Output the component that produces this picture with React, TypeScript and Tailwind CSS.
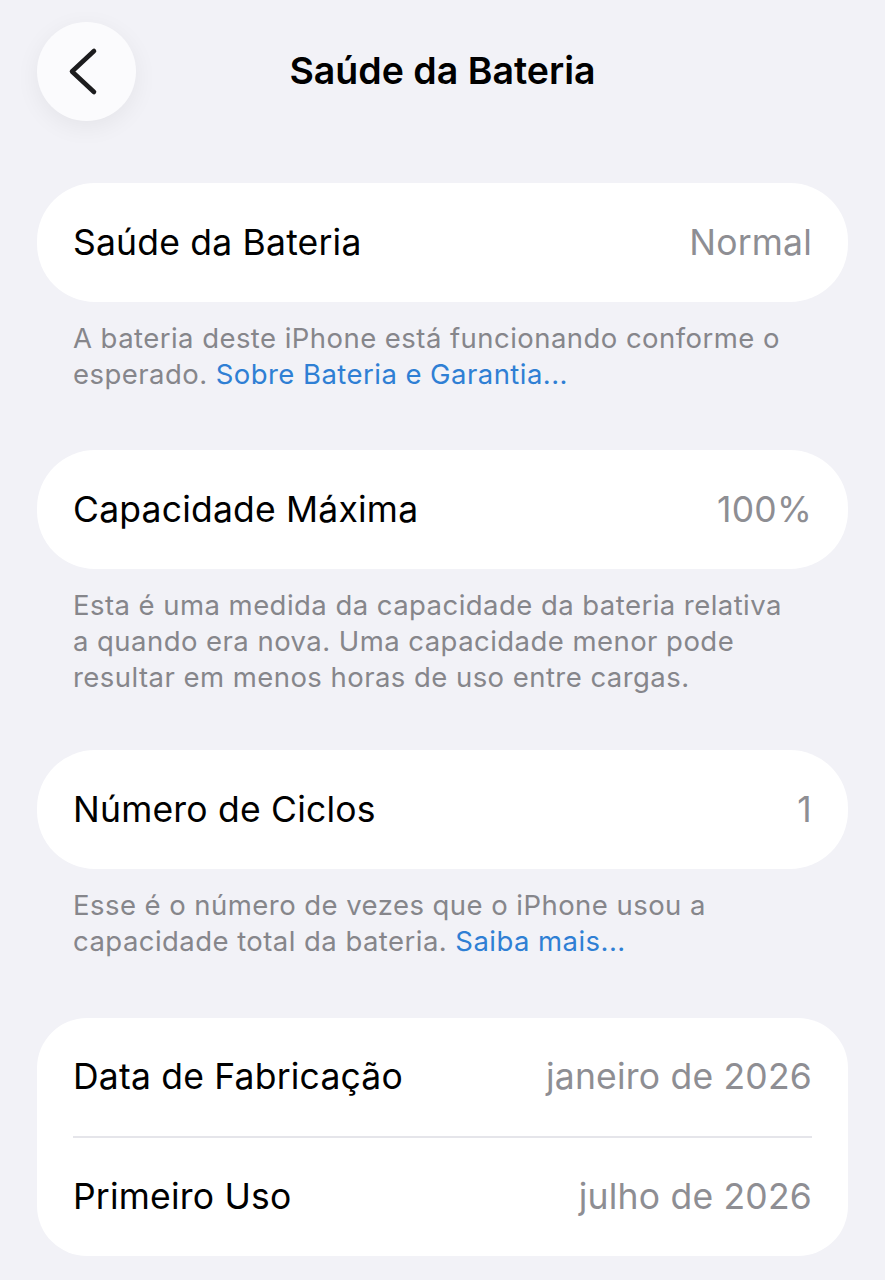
import type { ReactNode } from "react";

const font = { fontFamily: "Inter, 'Noto Sans', sans-serif" };

function Card({ children }: { children: ReactNode }) {
  return <div className="rounded-[58px] bg-white px-9">{children}</div>;
}

function Row({ label, value, tall = true }: { label: string; value: string; tall?: boolean }) {
  return (
    <div className={`flex items-center justify-between ${tall ? "h-[119px]" : "h-[118px]"}`}>
      <span className="text-[35.5px] tracking-[0.2px] text-black">{label}</span>
      <span className="text-[35.5px] tracking-[0.2px] text-[#8e8e93]">{value}</span>
    </div>
  );
}

function Note({ children }: { children: ReactNode }) {
  return (
    <p className="mt-[18px] px-9 text-[27.5px] leading-[36px] tracking-[0.45px] text-[#86868b]">
      {children}
    </p>
  );
}

export default function App() {
  return (
    <div className="min-h-[1280px] bg-[#f2f2f7] px-[37px] pt-[22px]" style={font}>
      <header className="relative flex h-[99px] items-center justify-center">
        <button
          type="button"
          className="absolute left-0 top-0 size-[99px] rounded-full bg-[#fbfbfd] shadow-[0_6px_24px_rgba(0,0,0,0.06)]"
        >
          <svg width="99" height="99" viewBox="0 0 99 99" fill="none">
            <path
              d="M57 29 L35 49.5 L57 70"
              stroke="#1c1c1e"
              strokeWidth="4.6"
              strokeLinecap="round"
              strokeLinejoin="round"
            />
          </svg>
        </button>
        <h1 className="text-[37.5px] font-semibold tracking-[0px] text-black">
          Saúde da Bateria
        </h1>
      </header>

      <div className="mt-[62px]">
        <Card>
          <Row label="Saúde da Bateria" value="Normal" />
        </Card>
        <Note>
          A bateria deste iPhone está funcionando conforme o
          <br />
          esperado.{" "}
          <span className="text-[#2f7fd4]">Sobre Bateria e Garantia...</span>
        </Note>
      </div>

      <div className="mt-[58px]">
        <Card>
          <Row label="Capacidade Máxima" value="100%" />
        </Card>
        <Note>
          Esta é uma medida da capacidade da bateria relativa
          <br />
          a quando era nova. Uma capacidade menor pode
          <br />
          resultar em menos horas de uso entre cargas.
        </Note>
      </div>

      <div className="mt-[55px]">
        <Card>
          <Row label="Número de Ciclos" value="1" />
        </Card>
        <Note>
          Esse é o número de vezes que o iPhone usou a
          <br />
          capacidade total da bateria.{" "}
          <span className="text-[#2f7fd4]">Saiba mais...</span>
        </Note>
      </div>

      <div className="mt-[59px]">
        <div className="rounded-[50px] bg-white px-9">
          <Row label="Data de Fabricação" value="janeiro de 2026" tall={false} />
          <div className="h-[2px] bg-[#e5e5ea]" />
          <Row label="Primeiro Uso" value="julho de 2026" tall={false} />
        </div>
      </div>
    </div>
  );
}
